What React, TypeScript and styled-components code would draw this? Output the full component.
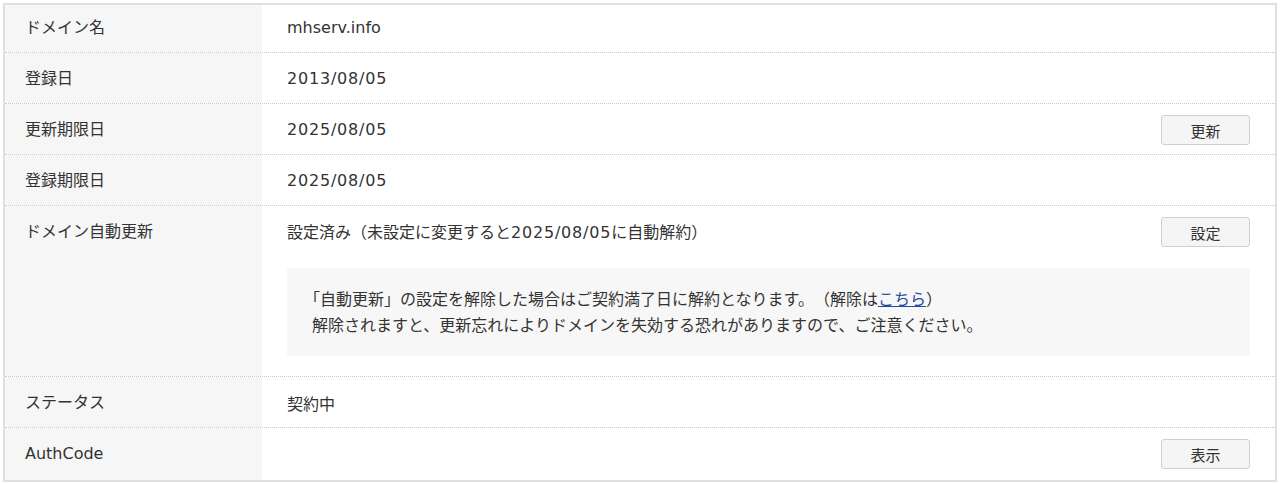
import React from "react";
import styled, { createGlobalStyle } from "styled-components";

const GlobalStyle = createGlobalStyle`
    html, body {
        margin: 0;
        padding: 0;
        background: #ffffff;
    }
    body {
        font-family: "Noto Sans CJK JP", sans-serif;
        color: #333333;
        text-spacing-trim: space-all;
    }
`;

const Page = styled.div`
    padding: 3px;
`;

const Table = styled.div`
    border: 2px solid #e0e0e0;
    background: #ffffff;
`;

const Label = styled.div`
    background: #f6f6f6;
    padding: 12px 20px 14px;
    font-size: 16px;
    line-height: 24px;
`;

const Value = styled.div<{ $tall?: boolean }>`
    padding: ${props => (props.$tall ? "10px 25px 20px" : "11px 25px 9px")};
    font-size: 16px;
    display: flex;
    flex-direction: column;
`;

const Row = styled.div`
    display: grid;
    grid-template-columns: 257px 1fr;
    & + & {
        border-top: 1px dotted #c8c8c8;
    }
    &:first-child ${Label} {
        padding-top: 9px;
    }
    &:first-child ${Value} {
        padding-top: 8px;
    }
`;

const Line = styled.div`
    display: flex;
    align-items: center;
    justify-content: space-between;
    min-height: 30px;
    line-height: 30px;
`;

const Latin = styled.span<{ $wide?: boolean }>`
    font-family: "DejaVu Sans", sans-serif;
    letter-spacing: ${props => (props.$wide ? "0.8px" : "0")};
`;

const Button = styled.button`
    width: 89px;
    height: 30px;
    flex: none;
    padding: 0;
    background: #f5f5f5;
    border: 1px solid #cfcfcf;
    border-radius: 3px;
    font-family: "Noto Sans CJK JP", sans-serif;
    font-size: 15px;
    color: #333333;
    cursor: pointer;
`;

const Notice = styled.div`
    margin-top: 20px;
    background: #f7f7f7;
    padding: 17px 25px 19px;
    font-size: 16px;
    line-height: 26px;
`;

const NoticeLine = styled.p<{ $hang?: boolean }>`
    margin: 0;
    text-indent: ${props => (props.$hang ? "-8px" : "0")};
`;

const Link = styled.a`
    color: #1f4d9e;
    text-decoration: underline;
`;

interface Item {
    label: string;
    value: string;
    date?: boolean;
    button?: string;
}

const items: Item[] = [
    { label: "ドメイン名", value: "mhserv.info" },
    { label: "登録日", value: "2013/08/05", date: true },
    { label: "更新期限日", value: "2025/08/05", date: true, button: "更新" },
    { label: "登録期限日", value: "2025/08/05", date: true },
];

const App = () => (
    <>
        <GlobalStyle />
        <Page>
            <Table>
                {items.map(item => (
                    <Row key={item.label}>
                        <Label>{item.label}</Label>
                        <Value>
                            <Line>
                                <Latin $wide={item.date}>{item.value}</Latin>
                                {item.button && <Button>{item.button}</Button>}
                            </Line>
                        </Value>
                    </Row>
                ))}
                <Row>
                    <Label>ドメイン自動更新</Label>
                    <Value $tall>
                        <Line>
                            <span>
                                設定済み（未設定に変更すると<Latin $wide>2025/08/05</Latin>に自動解約）
                            </span>
                            <Button>設定</Button>
                        </Line>
                        <Notice>
                            <NoticeLine $hang>
                                「自動更新」の設定を解除した場合はご契約満了日に解約となります。（解除は<Link href="#">こちら</Link>）
                            </NoticeLine>
                            <NoticeLine>
                                解除されますと、更新忘れによりドメインを失効する恐れがありますので、ご注意ください。
                            </NoticeLine>
                        </Notice>
                    </Value>
                </Row>
                <Row>
                    <Label>ステータス</Label>
                    <Value>
                        <Line>
                            <span>契約中</span>
                        </Line>
                    </Value>
                </Row>
                <Row>
                    <Label>
                        <Latin>AuthCode</Latin>
                    </Label>
                    <Value>
                        <Line>
                            <span></span>
                            <Button>表示</Button>
                        </Line>
                    </Value>
                </Row>
            </Table>
        </Page>
    </>
);

export default App;
